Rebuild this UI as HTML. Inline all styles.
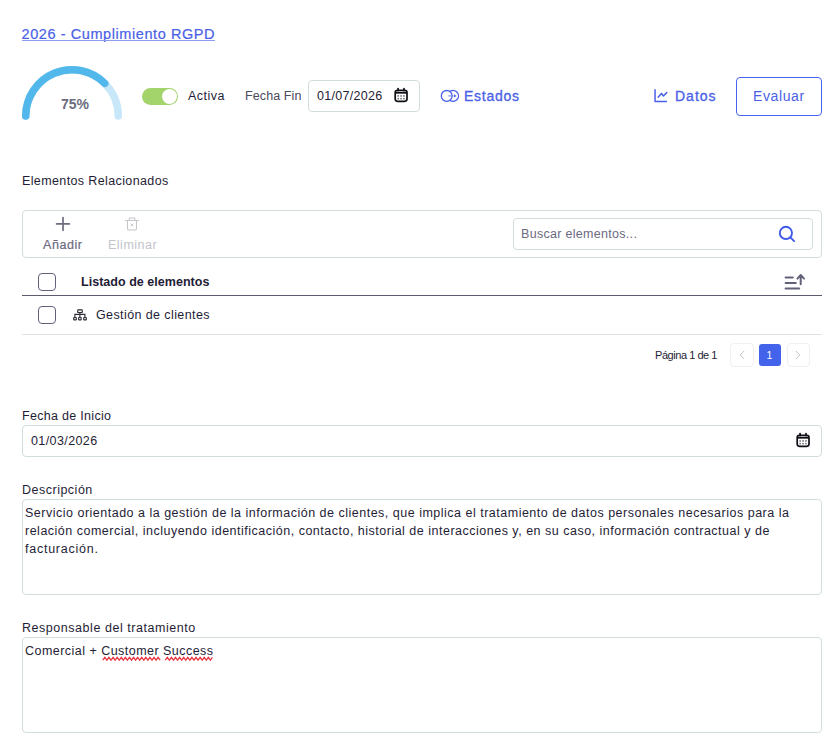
<!DOCTYPE html>
<html><head><meta charset="utf-8">
<style>
html,body{margin:0;padding:0;background:#fff;width:830px;height:749px;overflow:hidden;}
body{position:relative;font-family:"Liberation Sans",sans-serif;color:#1f1d36;}
.t{position:absolute;white-space:nowrap;line-height:16px;height:16px;}
.box{position:absolute;box-sizing:border-box;border:1px solid #d3dddd;border-radius:4px;background:#fff;}
svg{position:absolute;overflow:visible;}
</style></head><body>

<!-- Title -->
<div class="t" id="title" style="left:21.5px;top:26px;font-size:14.5px;letter-spacing:0.58px;color:#4a61e6;-webkit-text-stroke:0.2px #4a61e6;">2026 - Cumplimiento RGPD</div>
<div style="position:absolute;left:22px;top:40px;width:193px;height:1px;background:#8e9df2;"></div>

<!-- Gauge -->
<svg width="830" height="130" style="left:0;top:0;">
  <path d="M 25.75 116 A 46.25 46.25 0 0 1 118.25 116" fill="none" stroke="#c8e7f9" stroke-width="7.5" stroke-linecap="round"/>
  <path d="M 25.75 116 A 46.25 46.25 0 0 1 104.7 83.3" fill="none" stroke="#52b7eb" stroke-width="7.5" stroke-linecap="round"/>
</svg>
<div class="t" id="pct" style="left:61px;top:96px;font-size:14px;font-weight:bold;color:#6c6c80;">75%</div>

<!-- Toggle -->
<div style="position:absolute;left:142px;top:88px;width:36px;height:17px;border-radius:9px;background:#a3d46c;"></div>
<div style="position:absolute;left:161.5px;top:88.8px;width:15.5px;height:15.5px;border-radius:50%;background:#fff;"></div>
<div class="t" id="activa" style="left:188px;top:88px;font-size:12.5px;letter-spacing:0.5px;">Activa</div>

<div class="t" id="ff" style="left:245px;top:88px;font-size:12.5px;letter-spacing:0.1px;color:#4a4a5c;">Fecha Fin</div>
<div class="box" style="left:308px;top:80px;width:112px;height:32px;"></div>
<div class="t" id="d1" style="left:317px;top:88px;font-size:12.5px;letter-spacing:0.3px;">01/07/2026</div>

<!-- Estados -->
<div class="t" id="est" style="left:464px;top:88px;font-size:14px;letter-spacing:0.75px;color:#4a61e6;-webkit-text-stroke:0.32px #4a61e6;">Estados</div>
<!-- Datos -->
<div class="t" id="datos" style="left:675px;top:88px;font-size:14px;letter-spacing:1px;color:#4a61e6;-webkit-text-stroke:0.32px #4a61e6;">Datos</div>
<!-- Evaluar -->
<div class="box" style="left:736px;top:77px;width:86px;height:39px;border-color:#4763ee;"></div>
<div class="t" id="eval" style="left:753px;top:88px;font-size:14px;letter-spacing:0.6px;color:#4a61e6;">Evaluar</div>

<!-- Elementos Relacionados -->
<div class="t" id="er" style="left:22px;top:173px;font-size:12.5px;letter-spacing:0.38px;">Elementos Relacionados</div>

<!-- Toolbar -->
<div class="box" style="left:22px;top:210px;width:800px;height:48px;"></div>
<div class="t" id="an" style="left:43px;top:237px;font-size:12.5px;letter-spacing:0.55px;color:#6b6a80;-webkit-text-stroke:0.2px #6b6a80;">Añadir</div>
<div class="t" id="el" style="left:108px;top:237px;font-size:12.5px;letter-spacing:0.5px;color:#c3c3cb;">Eliminar</div>
<div class="box" style="left:513px;top:218px;width:300px;height:32px;"></div>
<div class="t" id="bus" style="left:521px;top:226px;font-size:12.5px;letter-spacing:0.3px;color:#6b6a80;">Buscar elementos...</div>

<!-- Table header -->
<div class="t" id="lis" style="left:81px;top:274px;font-size:12.5px;font-weight:bold;letter-spacing:0.03px;">Listado de elementos</div>
<div style="position:absolute;left:22px;top:295px;width:800px;height:1px;background:#5c5b70;"></div>
<div class="t" id="ges" style="left:96px;top:307px;font-size:12.5px;letter-spacing:0.4px;">Gestión de clientes</div>
<div style="position:absolute;left:22px;top:334px;width:800px;height:1px;background:#e3e3e6;"></div>
<div class="t" id="pag" style="left:655px;top:347px;font-size:11px;letter-spacing:-0.45px;">Página 1 de 1</div>

<!-- Fecha de inicio -->
<div class="t" id="fi" style="left:22px;top:408px;font-size:12.5px;letter-spacing:0.3px;">Fecha de Inicio</div>
<div class="box" style="left:22px;top:425px;width:800px;height:32px;"></div>
<div class="t" id="d2" style="left:31px;top:433px;font-size:12.5px;letter-spacing:0.4px;">01/03/2026</div>

<!-- Descripcion -->
<div class="t" id="desc" style="left:22px;top:482px;font-size:12.5px;letter-spacing:0.5px;">Descripción</div>
<div class="box" style="left:22px;top:499px;width:800px;height:96px;"></div>
<div class="t" style="left:25px;top:505px;font-size:12.5px;letter-spacing:0.5px;">Servicio orientado a la gestión de la información de clientes, que implica el tratamiento de datos personales necesarios para la</div>
<div class="t" style="left:25px;top:523px;font-size:12.5px;letter-spacing:0.5px;">relación comercial, incluyendo identificación, contacto, historial de interacciones y, en su caso, información contractual y de</div>
<div class="t" style="left:25px;top:541px;font-size:12.5px;letter-spacing:0.75px;">facturación.</div>

<!-- Responsable -->
<div class="t" id="resp" style="left:22px;top:620px;font-size:12.5px;letter-spacing:0.54px;">Responsable del tratamiento</div>
<div class="box" style="left:22px;top:637px;width:800px;height:96px;"></div>
<div class="t" id="com" style="left:25px;top:643px;font-size:12.5px;letter-spacing:0.47px;">Comercial + Customer Success</div>


<!-- ICONS -->
<svg width="26" height="26" style="left:388px;top:82px;" viewBox="0 0 26 26">
  <rect x="7.2" y="8.3" width="11.8" height="11" rx="2.2" fill="none" stroke="#0e0e14" stroke-width="1.7"/>
  <line x1="7.2" y1="10.8" x2="19" y2="10.8" stroke="#0e0e14" stroke-width="1.7"/>
  <line x1="10.1" y1="6.6" x2="10.1" y2="8.6" stroke="#0e0e14" stroke-width="1.7" stroke-linecap="round"/>
  <line x1="16" y1="6.6" x2="16" y2="8.6" stroke="#0e0e14" stroke-width="1.7" stroke-linecap="round"/>
  <g fill="#6a6a70"><rect x="9.4" y="13.2" width="1.5" height="1.5"/><rect x="12.3" y="13.2" width="1.5" height="1.5"/><rect x="15.2" y="13.2" width="1.5" height="1.5"/>
  <rect x="9.4" y="15.9" width="1.5" height="1.5"/><rect x="12.3" y="15.9" width="1.5" height="1.5"/><rect x="15.2" y="15.9" width="1.5" height="1.5"/></g>
</svg><svg width="26" height="26" style="left:790px;top:426.7px;" viewBox="0 0 26 26">
  <rect x="7.2" y="8.3" width="11.8" height="11" rx="2.2" fill="none" stroke="#0e0e14" stroke-width="1.7"/>
  <line x1="7.2" y1="10.8" x2="19" y2="10.8" stroke="#0e0e14" stroke-width="1.7"/>
  <line x1="10.1" y1="6.6" x2="10.1" y2="8.6" stroke="#0e0e14" stroke-width="1.7" stroke-linecap="round"/>
  <line x1="16" y1="6.6" x2="16" y2="8.6" stroke="#0e0e14" stroke-width="1.7" stroke-linecap="round"/>
  <g fill="#6a6a70"><rect x="9.4" y="13.2" width="1.5" height="1.5"/><rect x="12.3" y="13.2" width="1.5" height="1.5"/><rect x="15.2" y="13.2" width="1.5" height="1.5"/>
  <rect x="9.4" y="15.9" width="1.5" height="1.5"/><rect x="12.3" y="15.9" width="1.5" height="1.5"/><rect x="15.2" y="15.9" width="1.5" height="1.5"/></g>
</svg>
<svg width="26" height="24" style="left:436px;top:84px;" viewBox="0 0 26 24">
  <circle cx="10.7" cy="11.9" r="5.4" fill="none" stroke="#4a61e6" stroke-width="1.3"/>
  <path d="M13.9 7.55 A5.4 5.4 0 1 1 13.9 16.25" fill="none" stroke="#4a61e6" stroke-width="1.3"/>
  <line x1="12.2" y1="11.9" x2="17.6" y2="11.9" stroke="#7d8ff0" stroke-width="1.1"/>
  <path d="M18 10.3 L20.5 11.9 L18 13.5 Z" fill="#4a61e6"/>
</svg>
<svg width="26" height="24" style="left:648px;top:83px;" viewBox="0 0 26 24">
  <path d="M7.05 6.7 V18.6 H18.4" fill="none" stroke="#4a61e6" stroke-width="1.5" stroke-linecap="round" stroke-linejoin="round"/>
  <path d="M10.3 14.1 L13.5 10.4 L15.4 13 L18.75 9.6" fill="none" stroke="#4a61e6" stroke-width="1.5" stroke-linecap="round" stroke-linejoin="round"/>
</svg>
<svg width="22" height="22" style="left:52px;top:212px;" viewBox="0 0 22 22">
  <path d="M11.03 5.6 V18.3 M4.6 11.9 H17.3" fill="none" stroke="#6e6d80" stroke-width="1.7" stroke-linecap="round"/>
</svg>
<svg width="22" height="22" style="left:121px;top:212px;" viewBox="0 0 22 22">
  <path d="M4.5 8.5 H17.4" fill="none" stroke="#c6c6cb" stroke-width="1.1" stroke-linecap="round"/>
  <path d="M8.4 8.5 V6 H13.8 V8.5" fill="none" stroke="#c6c6cb" stroke-width="1.1"/>
  <path d="M6.5 8.5 V16.5 Q6.5 18 8 18 H14 Q15.5 18 15.5 16.5 V8.5" fill="none" stroke="#c6c6cb" stroke-width="1.1"/>
  <path d="M9.6 11.6 L12.4 14.2 M12.4 11.6 L9.6 14.2" fill="none" stroke="#c6c6cb" stroke-width="1"/>
</svg>
<svg width="24" height="24" style="left:775px;top:222px;" viewBox="0 0 24 24">
  <circle cx="10.9" cy="10.9" r="6.1" fill="none" stroke="#3f5ae6" stroke-width="1.9"/>
  <path d="M15.6 15.6 L19.1 19.1" fill="none" stroke="#3f5ae6" stroke-width="1.9" stroke-linecap="round"/>
</svg>
<!-- checkboxes -->
<div style="position:absolute;left:38px;top:273px;width:18px;height:18px;box-sizing:border-box;border:1.5px solid #62617a;border-radius:4px;"></div>
<div style="position:absolute;left:38px;top:306px;width:18px;height:18px;box-sizing:border-box;border:1.5px solid #62617a;border-radius:4px;"></div>
<!-- tree icon -->
<svg width="24" height="22" style="left:68px;top:304px;" viewBox="0 0 24 22">
  <g fill="none" stroke="#2e2e38" stroke-width="1.15">
  <rect x="9.7" y="5.9" width="4.6" height="2.6" rx="0.6"/>
  <path d="M11.9 8.5 V13 M6.9 12.9 V10.4 H16.9 V12.9"/>
  <rect x="5.7" y="13.5" width="2.6" height="2.4" rx="0.5"/>
  <rect x="10.6" y="13.5" width="2.6" height="2.4" rx="0.5"/>
  <rect x="15.7" y="13.5" width="2.6" height="2.4" rx="0.5"/>
  </g>
</svg>
<!-- sort icon -->
<svg width="28" height="24" style="left:781px;top:270px;" viewBox="0 0 28 24">
  <path d="M4.6 7.4 H11.8 M4.6 13 H14.8 M4.6 18.4 H18.2" fill="none" stroke="#62617a" stroke-width="2" stroke-linecap="round"/>
  <path d="M19.7 14.3 V5.2 M16.4 8.6 L19.7 5 L23 8.6" fill="none" stroke="#62617a" stroke-width="2" stroke-linecap="round" stroke-linejoin="round"/>
</svg>
<!-- pagination -->
<div style="position:absolute;left:730px;top:343px;width:23.5px;height:23.5px;box-sizing:border-box;border:1px solid #f0f0f2;border-radius:4px;"></div>
<div style="position:absolute;left:759px;top:344px;width:22px;height:22px;border-radius:3px;background:#4263ea;"></div>
<div style="position:absolute;left:786.5px;top:343px;width:23.5px;height:23.5px;box-sizing:border-box;border:1px solid #f0f0f2;border-radius:4px;"></div>
<svg width="100" height="30" style="left:720px;top:340px;" viewBox="0 0 100 30">
  <path d="M24 11 L20.3 15 L24 19" fill="none" stroke="#c4c4c8" stroke-width="1"/>
  <path d="M76 11 L79.7 15 L76 19" fill="none" stroke="#c4c4c8" stroke-width="1"/>
</svg>
<div class="t" style="left:766.5px;top:347px;font-size:10.5px;color:#fff;">1</div>
<!-- spell squiggles -->
<svg width="130" height="6" style="left:100px;top:656px;" viewBox="0 0 130 6">
  <path d="M2.8 4.1 L4.8 1.3 L6.9 4.1 L8.9 1.3 L11.0 4.1 L13.1 1.3 L15.1 4.1 L17.2 1.3 L19.2 4.1 L21.3 1.3 L23.3 4.1 L25.4 1.3 L27.4 4.1 L29.5 1.3 L31.5 4.1 L33.6 1.3 L35.6 4.1 L37.6 1.3 L39.7 4.1 L41.7 1.3 L43.8 4.1 L45.8 1.3 L47.9 4.1 L49.9 1.3 L52.0 4.1 L54.0 1.3 L56.1 4.1 L58.1 1.3 L60.2 4.1 M65.3 4.1 L67.3 1.3 L69.4 4.1 L71.4 1.3 L73.5 4.1 L75.5 1.3 L77.6 4.1 L79.6 1.3 L81.7 4.1 L83.7 1.3 L85.8 4.1 L87.8 1.3 L89.9 4.1 L91.9 1.3 L94.0 4.1 L96.0 1.3 L98.1 4.1 L100.1 1.3 L102.2 4.1 L104.2 1.3 L106.3 4.1 L108.3 1.3 L110.4 4.1 L112.4 1.3" fill="none" stroke="#e8353f" stroke-width="1.25"/>
</svg>

</body></html>
